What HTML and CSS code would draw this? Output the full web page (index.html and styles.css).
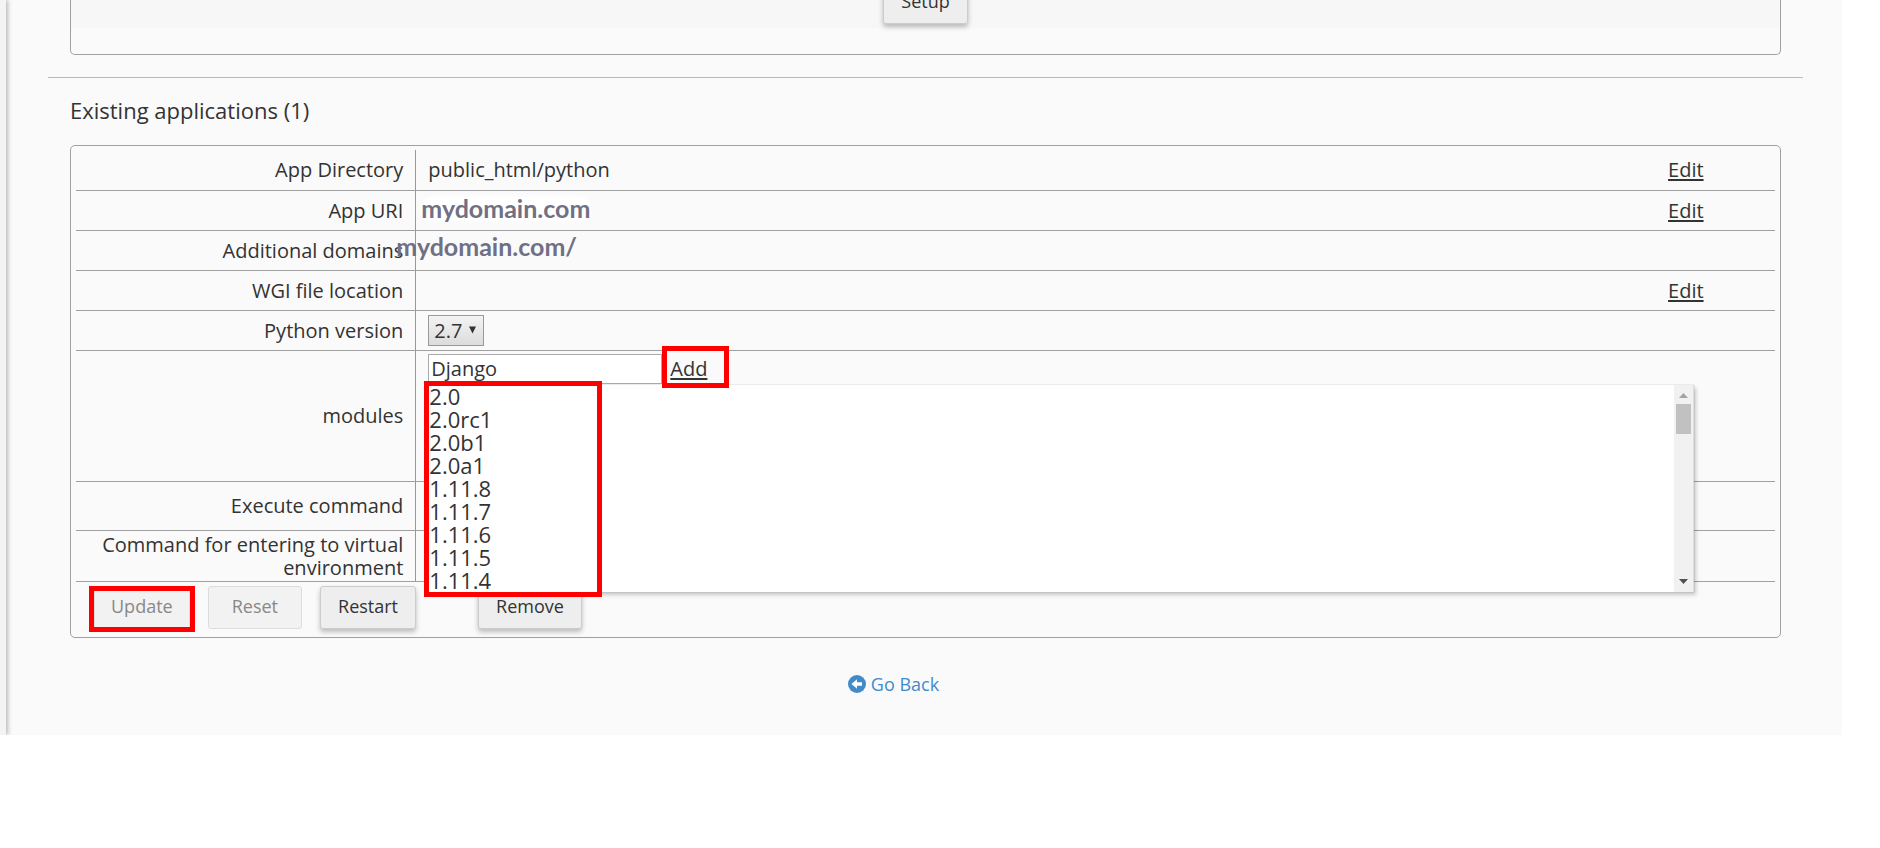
FILE: index.html
```html
<!DOCTYPE html>
<html lang="en">

<head>
    <meta charset="UTF-8">
    <meta name="viewport" content="width=device-width, initial-scale=1.0">
    <title>Setup Python App</title>
    <link rel="stylesheet" href="styles.css">
</head>

<body>
    <div class="page">
        <div class="sidebar"></div>
        <main class="content">
            <section class="panel setup-panel">
                <div class="setup-row">
                    <button type="button" class="btn">Setup</button>
                </div>
            </section>

            <hr class="divider">

            <h2 class="title">Existing applications (1)</h2>

            <form class="panel app-panel">
                <table class="app-table">
                    <colgroup>
                        <col class="col-label">
                        <col class="col-value">
                        <col class="col-action">
                    </colgroup>
                    <tbody>
                        <tr>
                            <th scope="row">App Directory</th>
                            <td>public_html/python</td>
                            <td><a href="#">Edit</a></td>
                        </tr>
                        <tr>
                            <th scope="row">App URI</th>
                            <td class="cell-domain"><span class="domain domain-uri">mydomain.com</span></td>
                            <td><a href="#">Edit</a></td>
                        </tr>
                        <tr>
                            <th scope="row">Additional domains</th>
                            <td class="cell-domain"><span class="domain domain-extra">mydomain.com/</span></td>
                            <td></td>
                        </tr>
                        <tr>
                            <th scope="row">WGI file location</th>
                            <td></td>
                            <td><a href="#">Edit</a></td>
                        </tr>
                        <tr>
                            <th scope="row"><label for="version">Python version</label></th>
                            <td>
                                <div class="select-wrap">
                                    <select id="version" class="version">
                                        <option>2.7</option>
                                    </select>
                                    <svg class="caret" viewBox="0 0 8 8"><path d="M0 0h8L4 8z" fill="#333"/></svg>
                                </div>
                            </td>
                            <td></td>
                        </tr>
                        <tr class="row-modules">
                            <th scope="row"><label for="module">modules</label></th>
                            <td class="cell-modules">
                                <div class="module-add">
                                    <input type="text" id="module" class="module-input" value="Django">
                                    <span class="add-wrap"><a href="#">Add</a></span>
                                </div>
                                <div class="menu">
                                    <ul class="menu-list">
                                        <li>2.0</li>
                                        <li>2.0rc1</li>
                                        <li>2.0b1</li>
                                        <li>2.0a1</li>
                                        <li>1.11.8</li>
                                        <li>1.11.7</li>
                                        <li>1.11.6</li>
                                        <li>1.11.5</li>
                                        <li>1.11.4</li>
                                    </ul>
                                    <div class="scrollbar">
                                        <svg class="arrow" viewBox="0 0 9 5"><path d="M0 5h9L4.500 0z" fill="#a3a3a3"/></svg>
                                        <div class="thumb"></div>
                                        <svg class="arrow arrow-down" viewBox="0 0 9 5"><path d="M0 0h9L4.500 5z" fill="#505050"/></svg>
                                    </div>
                                </div>
                            </td>
                            <td></td>
                        </tr>
                        <tr class="row-command">
                            <th scope="row">Execute command</th>
                            <td></td>
                            <td></td>
                        </tr>
                        <tr class="row-env">
                            <th scope="row">Command for entering to virtual environment</th>
                            <td></td>
                            <td></td>
                        </tr>
                    </tbody>
                </table>

                <div class="actions">
                    <span class="update-wrap"><button type="button" class="btn" disabled>Update</button></span>
                    <button type="button" class="btn btn-reset" disabled>Reset</button>
                    <button type="button" class="btn">Restart</button>
                    <button type="button" class="btn btn-remove">Remove</button>
                </div>
            </form>

            <div class="footer">
                <a href="#" class="go-back">
                    <svg class="back-icon" viewBox="0 0 18 18">
                        <circle cx="9" cy="9" r="9" fill="#428bca"/>
                        <path d="M3.500 9L9 4.200v3h5v3.600H9v3z" fill="#fff"/>
                    </svg>
                    <span>Go Back</span>
                </a>
            </div>
        </main>
    </div>
</body>

</html>
```
FILE: styles.css
```css
*,
*::before,
*::after {
    box-sizing: border-box;
}

body {
    margin: 0;
    background: #fff;
    color: #333;
    font-family: "Open Sans", sans-serif;
    font-size: 20px;
    line-height: 23px;
}

a {
    color: #333;
    text-underline-offset: 2px;
    text-decoration-thickness: 2px;
}

.page {
    display: flex;
    margin-right: 38px;
    background: #fafafa;
}

.sidebar {
    width: 6px;
    background: #f4f4f4;
    box-shadow: 2px 0 4px rgba(0, 0, 0, 0.25);
}

.content {
    flex: 1;
    padding: 0 39px 39px 42px;
}

.panel {
    margin: 0 22px;
    border: 1px solid #a0a0a0;
    border-radius: 5px;
}

/* Setup */
.setup-panel {
    border-top: 0;
    border-radius: 0 0 5px 5px;
    padding-bottom: 26px;
}

.setup-row {
    display: flex;
    justify-content: center;
    align-items: flex-end;
    height: 28px;
    padding-bottom: 4px;
    background: #f7f7f7;
}

.divider {
    margin: 22px 0 0;
    border: 0;
    border-top: 1px solid #bbb;
}

.title {
    margin: 17px 22px 20px;
    font-size: 22px;
    font-weight: 400;
    line-height: 30px;
}

/* Buttons */
.btn {
    flex: none;
    height: 43px;
    padding: 0 17px 3px;
    border: 1px solid #ccc;
    border-radius: 3px;
    background: #eee;
    box-shadow: 0 3px 5px rgba(0, 0, 0, 0.25);
    color: #333;
    font-family: inherit;
    font-size: 18px;
}

.btn:disabled {
    padding: 0 16px 3px;
    border-color: #ddd;
    background: #f2f2f2;
    box-shadow: none;
    color: #888;
}

/* Application table */
.app-panel {
    padding: 4px 5px 8px;
}

.app-table {
    width: 100%;
    table-layout: fixed;
    border-collapse: collapse;
}

.col-label {
    width: 20%;
}

.col-value {
    width: 73%;
}

.col-action {
    width: 7%;
}

.app-table tr {
    height: 40px;
}

.app-table th,
.app-table td {
    padding: 0 12px;
    border-bottom: 1px solid #a0a0a0;
    text-align: left;
    vertical-align: middle;
}

.app-table th {
    border-right: 1px solid #999;
    font-weight: 400;
    text-align: right;
}

.app-table .row-modules {
    height: 131px;
}

.app-table .row-command {
    height: 49px;
}

.app-table .row-env {
    height: 51px;
}

.app-table .cell-domain {
    position: relative;
}

.domain {
    position: absolute;
    color: #707085;
    font-family: Lato, sans-serif;
    font-size: 25px;
    font-weight: 700;
}

.domain-uri {
    top: 6px;
    left: 5px;
    border-radius: 12px;
    background: #fff;
    box-shadow: 0 0 6px #fff;
}

.domain-extra {
    top: 4px;
    left: -20px;
}

.select-wrap {
    position: relative;
    width: 56px;
    height: 31px;
}

.version {
    appearance: none;
    width: 100%;
    height: 100%;
    padding: 0 5px;
    border: 1px solid #999;
    border-radius: 0;
    background: linear-gradient(#f3f3f3, #dcdcdc);
    color: #333;
    font-family: inherit;
    font-size: 20px;
}

.caret {
    position: absolute;
    top: 11px;
    right: 8px;
    width: 7px;
    height: 8px;
    pointer-events: none;
}

/* Modules */
.app-table .cell-modules {
    position: relative;
    padding-top: 3px;
    vertical-align: top;
}

.module-add {
    display: flex;
    align-items: center;
}

.module-input {
    width: 234px;
    height: 30px;
    padding: 0 2px;
    border: 1px solid #aaa;
    background: #fff;
    color: #333;
    font-family: inherit;
    font-size: 20px;
}

.add-wrap {
    position: relative;
    z-index: 2;
    padding-left: 8px;
}

/* Red frames mark the steps to follow */
.add-wrap::after,
.menu::before,
.update-wrap::after {
    content: "";
    position: absolute;
    border: 5px solid #f00;
    pointer-events: none;
}

.add-wrap::after {
    top: -11px;
    left: 0;
    width: 67px;
    height: 42px;
}

.menu {
    position: absolute;
    z-index: 1;
    top: 34px;
    left: 12px;
    right: -38px;
    display: flex;
    border-right: 1px solid #ddd;
    background: #fff;
    box-shadow: 2px 3px 4px rgba(0, 0, 0, 0.2), 0 0 1px rgba(0, 0, 0, 0.3);
}

.menu::before {
    top: -4px;
    left: -4px;
    width: 178px;
    height: 216px;
}

.menu-list {
    flex: 1;
    margin: 0;
    padding: 0 1px;
    list-style: none;
    font-size: 22px;
}

.scrollbar {
    display: flex;
    flex-direction: column;
    align-items: center;
    width: 19px;
    padding: 8px 0;
    background: #f1f1f1;
}

.arrow {
    width: 9px;
    height: 5px;
}

.arrow-down {
    margin-top: auto;
}

.thumb {
    width: 15px;
    height: 30px;
    margin-top: 6px;
    background: #c1c1c1;
}

/* Actions */
.actions {
    display: flex;
    gap: 18px;
    padding: 4px 18px 0;
}

.actions .btn-reset {
    padding: 0 23px 3px;
}

.actions .btn-remove {
    margin-left: 44px;
}

.update-wrap {
    position: relative;
}

.update-wrap::after {
    top: 0;
    left: -5px;
    right: -5px;
    height: 46px;
}

.footer {
    display: flex;
    justify-content: center;
    margin: 35px 64px 0 0;
}

.go-back {
    display: flex;
    align-items: center;
    gap: 5px;
    color: #428bca;
    font-size: 18px;
    text-decoration: none;
}

.back-icon {
    width: 18px;
    height: 18px;
}
```
